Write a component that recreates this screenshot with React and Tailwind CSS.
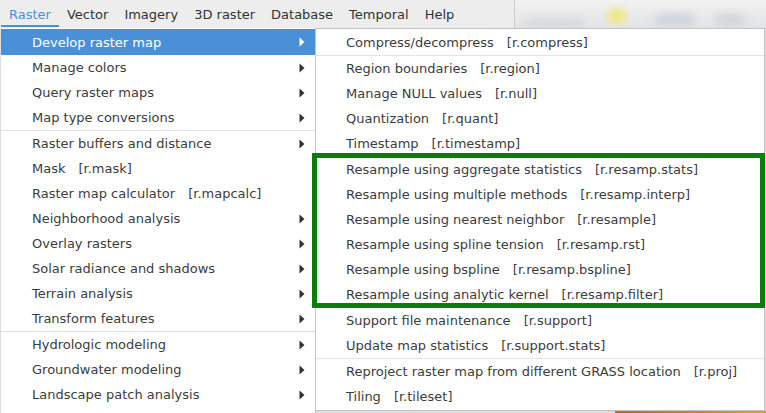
const menubar = ['Vector', 'Imagery', '3D raster', 'Database', 'Temporal', 'Help'];

const mainItems = [
  { label: 'Develop raster map', sub: true, active: true },
  { label: 'Manage colors', sub: true },
  { label: 'Query raster maps', sub: true },
  { label: 'Map type conversions', sub: true },
  { sep: true },
  { label: 'Raster buffers and distance', sub: true },
  { label: 'Mask', cmd: '[r.mask]' },
  { label: 'Raster map calculator', cmd: '[r.mapcalc]' },
  { label: 'Neighborhood analysis', sub: true },
  { label: 'Overlay rasters', sub: true },
  { label: 'Solar radiance and shadows', sub: true },
  { label: 'Terrain analysis', sub: true },
  { label: 'Transform features', sub: true },
  { sep: true },
  { label: 'Hydrologic modeling', sub: true },
  { label: 'Groundwater modeling', sub: true },
  { label: 'Landscape patch analysis', sub: true },
];

const subItems = [
  { label: 'Compress/decompress', cmd: '[r.compress]' },
  { sep: true },
  { label: 'Region boundaries', cmd: '[r.region]' },
  { label: 'Manage NULL values', cmd: '[r.null]' },
  { label: 'Quantization', cmd: '[r.quant]' },
  { label: 'Timestamp', cmd: '[r.timestamp]' },
  { sep: true },
  { label: 'Resample using aggregate statistics', cmd: '[r.resamp.stats]' },
  { label: 'Resample using multiple methods', cmd: '[r.resamp.interp]' },
  { label: 'Resample using nearest neighbor', cmd: '[r.resample]' },
  { label: 'Resample using spline tension', cmd: '[r.resamp.rst]' },
  { label: 'Resample using bspline', cmd: '[r.resamp.bspline]' },
  { label: 'Resample using analytic kernel', cmd: '[r.resamp.filter]' },
  { sep: true },
  { label: 'Support file maintenance', cmd: '[r.support]' },
  { label: 'Update map statistics', cmd: '[r.support.stats]' },
  { sep: true },
  { label: 'Reproject raster map from different GRASS location', cmd: '[r.proj]' },
  { label: 'Tiling', cmd: '[r.tileset]' },
];

const Arrow = ({ white }) => (
  <svg width="6" height="10" viewBox="0 0 6 10" className="shrink-0">
    <path d="M0.5 0.5 L5.5 5 L0.5 9.5 Z" fill={white ? '#ffffff' : '#2e3436'} />
  </svg>
);

const MenuRow = ({ item, padLeft }) => {
  if (item.sep) return <div className="h-px bg-[#e3e3e3]" />;
  return (
    <div
      className={`flex items-center pr-[10px] ${padLeft} ${
        item.active ? 'h-[26px] bg-[#4a90d9] text-white' : 'h-[25px] text-[#3c3c3c]'
      }`}
    >
      <span className="whitespace-nowrap">{item.label}</span>
      {item.cmd && <span className="ml-[13px] whitespace-nowrap">{item.cmd}</span>}
      <div className="flex-1" />
      {item.sub && <Arrow white={item.active} />}
    </div>
  );
};

export default function App() {
  return (
    <div
      className="w-[766px] h-[413px] relative overflow-hidden bg-[#dcdcdc] text-[13px] leading-none"
      style={{ fontFamily: '"DejaVu Sans", sans-serif' }}
    >
      {/* top bar */}
      <div className="flex h-[28px]">
        <div className="w-[515px] h-full bg-[#ededed] border-r border-[#cfcfcf] flex items-stretch text-[#2e3436]">
          <div className="relative flex items-center px-[8px] ml-[1px] text-[#4a90d9]">
            Raster
            <div className="absolute left-0 right-0 bottom-[1px] h-[2px] bg-[#4a90d9]" />
          </div>
          {menubar.map((m) => (
            <div key={m} className="flex items-center px-[8px]">
              {m}
            </div>
          ))}
        </div>
        <div className="flex-1 relative bg-gradient-to-b from-[#f2f2f2] to-[#e2e4e6] overflow-hidden">
          <div className="absolute left-[92px] top-[8px] w-[20px] h-[16px] rounded-full bg-[#f1e78e] blur-[3px]" />
          <div className="absolute left-[10px] top-[18px] w-[60px] h-[12px] rounded-full bg-[#d8dadc] blur-[4px]" />
          <div className="absolute left-[140px] top-[14px] w-[40px] h-[12px] rounded-full bg-[#cdd3da] blur-[4px]" />
          <div className="absolute left-[200px] top-[14px] w-[30px] h-[12px] rounded-full bg-[#d0d4d8] blur-[4px]" />
        </div>
      </div>

      <div className="flex items-start">
        {/* main menu */}
        <div className="w-[315px] ml-[1px] bg-white border-r border-[#c4c4c4] pt-[1px] pb-[20px]">
          {mainItems.map((item, i) => (
            <MenuRow key={i} item={item} padLeft="pl-[31px]" />
          ))}
        </div>

        {/* submenu */}
        <div className="flex-1 flex flex-col">
          <div className="w-[449px] bg-white border border-[#c4c4c4] border-l-0 pt-[1px] pb-[1px]">
            {subItems.map((item, i) => (
              <MenuRow key={i} item={item} padLeft="pl-[30px]" />
            ))}
          </div>
          <div className="flex h-[10px]">
            <div className="w-[299px] bg-[#dddddd]" />
            <div className="flex-1 bg-gradient-to-r from-[#c8651a] to-[#e89a2a]" />
          </div>
        </div>
      </div>

      {/* green highlight annotation */}
      <div className="absolute left-[312px] top-[153px] w-[453px] h-[155px] border-[5px] border-[#0a7d0a]" />
    </div>
  );
}
